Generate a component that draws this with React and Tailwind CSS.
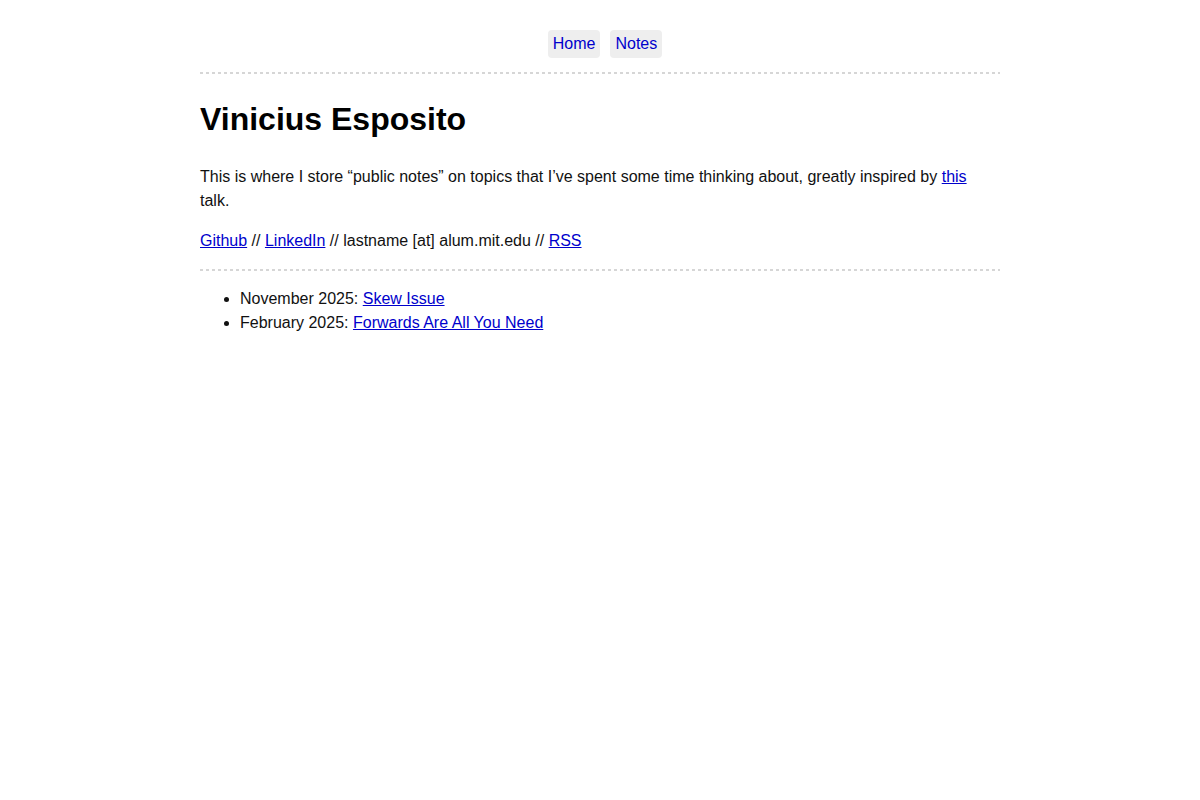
export default function App() {
  const link = "text-[#0000cc] underline";
  const sep = "h-[2px] w-full bg-[repeating-linear-gradient(90deg,#d6d6d6_0px,#d6d6d6_3px,transparent_3px,transparent_6px)]";
  return (
    <div className="min-h-[800px] bg-white text-[#111] text-[16px] leading-[24px]" style={{ fontFamily: '"Liberation Sans", Arial, sans-serif' }}>
      <div className="mx-auto w-[800px]">
        <nav className="flex justify-center gap-[10px] pl-[10px] pt-[30px] pb-[14px]">
          <a href="#" className="bg-[#eee] rounded-[4px] px-[5px] py-[2px] text-[#0000cc] no-underline">Home</a>
          <a href="#" className="bg-[#eee] rounded-[4px] px-[5px] py-[2px] text-[#0000cc] no-underline">Notes</a>
        </nav>
        <div className={sep} />
        <h1 className="mt-[27px] text-[32px] leading-[37px] font-bold text-black">Vinicius Esposito</h1>
        <p className="mt-[27px]">
          This is where I store “public notes” on topics that I’ve spent some time thinking about, greatly inspired by <a href="#" className={link}>this</a> talk.
        </p>
        <p className="mt-[16px] mb-[16px]">
          <a href="#" className={link}>Github</a> // <a href="#" className={link}>LinkedIn</a> // lastname [at] alum.mit.edu // <a href="#" className={link}>RSS</a>
        </p>
        <div className={sep} />
        <ul className="mt-[16px] pl-[40px] list-disc">
          <li>November 2025: <a href="#" className={link}>Skew Issue</a></li>
          <li>February 2025: <a href="#" className={link}>Forwards Are All You Need</a></li>
        </ul>
      </div>
    </div>
  );
}
